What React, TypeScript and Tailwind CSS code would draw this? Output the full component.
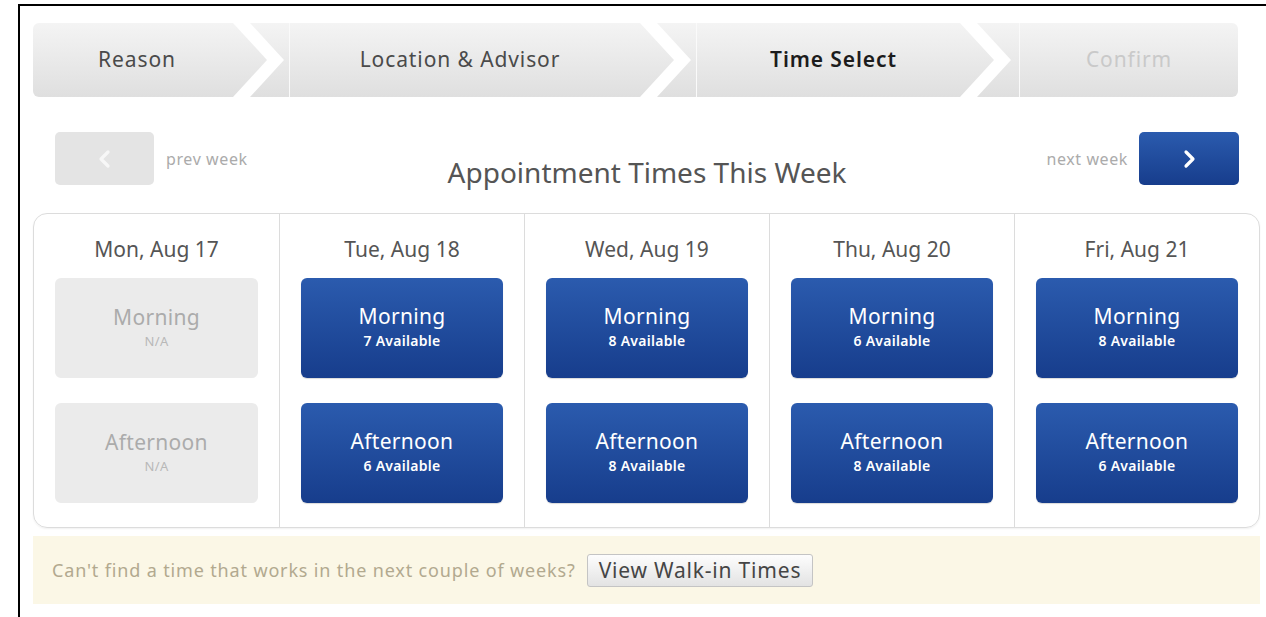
import React from "react";

type Day = { label: string; morning: number | null; afternoon: number | null };

const days: Day[] = [
  { label: "Mon, Aug 17", morning: null, afternoon: null },
  { label: "Tue, Aug 18", morning: 7, afternoon: 6 },
  { label: "Wed, Aug 19", morning: 8, afternoon: 8 },
  { label: "Thu, Aug 20", morning: 6, afternoon: 8 },
  { label: "Fri, Aug 21", morning: 8, afternoon: 6 },
];

function Slot({ name, count }: { name: string; count: number | null }) {
  if (count === null) {
    return (
      <div className="flex h-[100px] flex-col items-center justify-center rounded-[6px] bg-[#ebebeb] pb-[4px]">
        <div className="text-[21px] leading-[29px] tracking-[0.3px] text-[#ababab]">{name}</div>
        <div className="text-[13px] leading-[18px] tracking-[0.4px] text-[#b8b8b8]">N/A</div>
      </div>
    );
  }
  return (
    <button className="flex h-[100px] w-full flex-col items-center justify-center rounded-[6px] bg-gradient-to-b from-[#2b5bae] to-[#173d8c] pb-[4px] text-white shadow-[0_1px_1px_rgba(0,0,0,0.15)]">
      <span className="text-[21px] leading-[29px] tracking-[0.3px]">{name}</span>
      <span className="text-[14px] font-semibold leading-[19px] tracking-[0.3px]">{count} Available</span>
    </button>
  );
}

function Chevron({ dir }: { dir: "left" | "right" }) {
  return (
    <svg width="14" height="20" viewBox="0 0 14 20">
      <polyline
        points={dir === "left" ? "10,3 3,10 10,17" : "4,3 11,10 4,17"}
        fill="none"
        stroke="currentColor"
        strokeWidth="3.2"
        strokeLinecap="round"
        strokeLinejoin="round"
      />
    </svg>
  );
}

const stepBase =
  "ml-[-17px] flex bg-gradient-to-b from-[#f4f4f4] to-[#dfdfdf] text-[21px] tracking-[0.9px]";

export default function App() {
  return (
    <div className="min-h-screen bg-white font-['Noto_Sans','Open_Sans',sans-serif]">
      <div className="ml-[18px] mt-[4px] border-l-2 border-t-2 border-black pl-[13px] pr-[6px] pt-[17px] pb-[14px]">
        {/* progress steps */}
        <div className="flex h-[74px]">
          <div className="flex w-[234px] items-center justify-center rounded-l-[6px] bg-gradient-to-b from-[#f4f4f4] to-[#dfdfdf] pr-[26px] text-[21px] tracking-[0.9px] text-[#4a4a4a] [clip-path:polygon(0_0,calc(100%_-_34px)_0,100%_50%,calc(100%_-_34px)_100%,0_100%)]">
            Reason
          </div>
          <div className={`${stepBase} w-[424px] text-[#4a4a4a] [clip-path:polygon(0_0,calc(100%_-_34px)_0,100%_50%,calc(100%_-_34px)_100%,0_100%,34px_50%)]`}>
            <div className="w-[40px] shrink-0 border-r border-[#fafafa]" />
            <div className="flex flex-1 items-center justify-center pr-[44px]">Location &amp; Advisor</div>
          </div>
          <div className={`${stepBase} w-[337px] font-semibold text-[#1c1c1c] [clip-path:polygon(0_0,calc(100%_-_34px)_0,100%_50%,calc(100%_-_34px)_100%,0_100%,34px_50%)]`}>
            <div className="w-[40px] shrink-0 border-r border-[#fafafa]" />
            <div className="flex flex-1 items-center justify-center pr-[24px]">Time Select</div>
          </div>
          <div className={`${stepBase} w-[261px] rounded-r-[6px] text-[#c9c9c9] [clip-path:polygon(0_0,100%_0,100%_100%,0_100%,34px_50%)]`}>
            <div className="w-[43px] shrink-0 border-r border-[#fafafa]" />
            <div className="flex flex-1 items-center justify-center">Confirm</div>
          </div>
        </div>

        {/* week navigation */}
        <div className="mt-[31px] grid h-[53px] grid-cols-[1fr_auto_1fr] pl-[22px] pr-[21px]">
          <div className="flex items-center gap-[12px]">
            <button className="flex h-[53px] w-[99px] items-center justify-center rounded-[5px] bg-[#e4e4e4] text-[#f7f7f7]">
              <Chevron dir="left" />
            </button>
            <span className="text-[16px] tracking-[0.6px] text-[#ababab]">prev week</span>
          </div>
          <h1 className="pt-[27px] text-[28px] leading-[34px] text-[#555555]">Appointment Times This Week</h1>
          <div className="flex items-center justify-end gap-[11px]">
            <span className="text-[16px] tracking-[0.6px] text-[#ababab]">next week</span>
            <button className="flex h-[53px] w-[100px] items-center justify-center rounded-[5px] bg-gradient-to-b from-[#2b5bae] to-[#173d8c] text-white">
              <Chevron dir="right" />
            </button>
          </div>
        </div>

        {/* week grid */}
        <div className="mt-[32px] grid grid-cols-5 overflow-hidden rounded-[14px] border border-[#dcdcdc] shadow-[0_1px_2px_rgba(0,0,0,0.06)]">
          {days.map((d, i) => (
            <div
              key={d.label}
              className={`flex flex-col gap-[25px] px-[21px] pb-[24px] pt-[23px] ${i > 0 ? "border-l border-[#dcdcdc]" : ""}`}
            >
              <div className="-mb-[8px] text-center text-[21px] leading-[24px] text-[#555555]">{d.label}</div>
              <Slot name="Morning" count={d.morning} />
              <Slot name="Afternoon" count={d.afternoon} />
            </div>
          ))}
        </div>

        {/* walk-in hint */}
        <div className="mt-[8px] flex h-[68px] items-center gap-[11px] bg-[#fbf7e6] px-[19px]">
          <span className="text-[18px] tracking-[0.85px] text-[#b2a98f]">
            Can&apos;t find a time that works in the next couple of weeks?
          </span>
          <button className="h-[33px] rounded-[3px] border border-[#c4c4c4] bg-gradient-to-b from-[#fdfdfd] to-[#e3e3e3] px-[11px] text-[21px] leading-[31px] tracking-[0.8px] text-[#454545]">
            View Walk-in Times
          </button>
        </div>
      </div>
    </div>
  );
}
